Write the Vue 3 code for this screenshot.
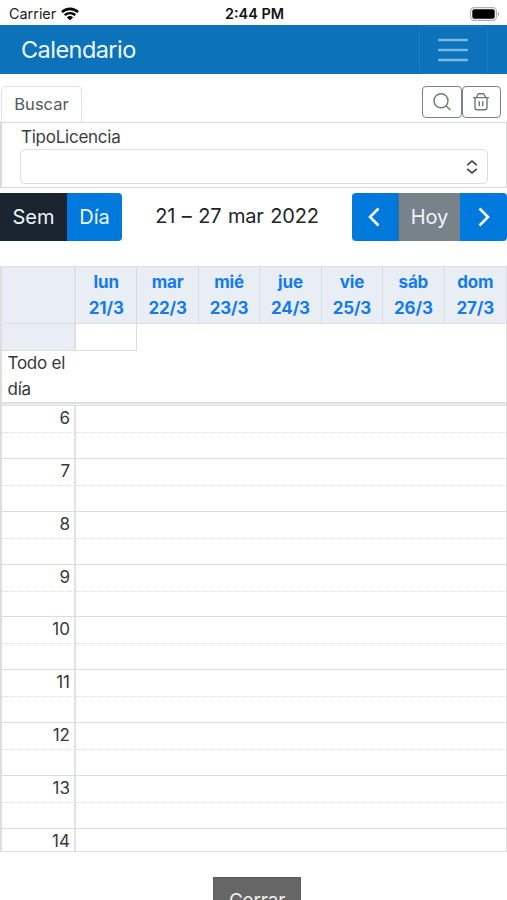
<script setup>
const days = [
  { name: 'lun', date: '21/3' },
  { name: 'mar', date: '22/3' },
  { name: 'mié', date: '23/3' },
  { name: 'jue', date: '24/3' },
  { name: 'vie', date: '25/3' },
  { name: 'sáb', date: '26/3' },
  { name: 'dom', date: '27/3' },
]
const hours = [6, 7, 8, 9, 10, 11, 12, 13, 14]
</script>

<template>
  <div class="screen">
    <div class="status">
      <div class="carrier">
        <span>Carrier</span>
        <svg class="wifi" viewBox="0 0 18 14" width="18" height="14">
          <path d="M1 5.1a11.6 11.6 0 0 1 16 0" fill="none" stroke="#000" stroke-width="2.6" />
          <path d="M3.7 8.2a7.7 7.7 0 0 1 10.6 0" fill="none" stroke="#000" stroke-width="2.3" />
          <path d="M9 13.3 5.9 10.4a4.5 4.5 0 0 1 6.2 0z" fill="#000" />
        </svg>
      </div>
      <div class="clock">2:44 PM</div>
      <svg class="battery" viewBox="0 0 30 14" width="30" height="14">
        <rect x=".6" y=".6" width="25.8" height="12.8" rx="3.6" fill="#fff" stroke="#b0b0b0" stroke-width="1.1" />
        <rect x="2.3" y="2.2" width="22.4" height="9.6" rx="2" fill="#000" />
        <path d="M27.8 4.8c2 .8 2 3.6 0 4.4z" fill="#aaa" />
      </svg>
    </div>

    <header class="navbar">
      <h1>Calendario</h1>
      <button class="toggler" aria-label="Menú">
        <svg viewBox="0 0 30 24" width="30" height="24">
          <path d="M1 2h28M1 12h28M1 22h28" stroke="#7cb8e3" stroke-width="2.3" stroke-linecap="round" />
        </svg>
      </button>
    </header>

    <div class="tabs">
      <div class="tab"><span>Buscar</span></div>
      <div class="actions">
        <button class="tool" aria-label="Buscar">
          <svg viewBox="0 0 20 20" width="20" height="20" fill="none" stroke="#70767b" stroke-width="1.4">
            <circle cx="9" cy="8.8" r="7" />
            <path d="m14 13.8 4.4 4.2" />
          </svg>
        </button>
        <button class="tool" aria-label="Borrar">
          <svg viewBox="0 0 20 20" width="20" height="20" fill="none" stroke="#70767b" stroke-width="1.4">
            <path d="M2 5.6h16M4 5.6v9.8q0 2.3 2.2 2.3h7.6q2.2 0 2.2-2.3V5.6M5.5 5.3l1.3-2.8q.3-.7 1-.7h4.4q.7 0 1 .7l1.3 2.8M8.3 9.3v5M11.7 9.3v5" />
          </svg>
        </button>
      </div>
    </div>

    <section class="filter">
      <label>TipoLicencia</label>
      <div class="select">
        <svg viewBox="0 0 12 14" width="12" height="14">
          <path d="m1.2 5.2 4.8-4 4.8 4M1.2 8.8l4.8 4 4.8-4" fill="none" stroke="#444" stroke-width="1.7" />
        </svg>
      </div>
    </section>

    <div class="toolbar">
      <div class="group views">
        <button class="sem">Sem</button>
        <button class="dia">Día</button>
      </div>
      <h2>21 – 27 mar 2022</h2>
      <div class="group paging">
        <button class="prev" aria-label="Anterior">
          <svg viewBox="0 0 12 20" width="12" height="20"><path d="M10.5 1.5 2 10l8.5 8.5" /></svg>
        </button>
        <button class="today">Hoy</button>
        <button class="next" aria-label="Siguiente">
          <svg viewBox="0 0 12 20" width="12" height="20"><path d="M1.5 1.5 10 10l-8.5 8.5" /></svg>
        </button>
      </div>
    </div>

    <section class="calendar">
      <div class="head">
        <div class="axis"></div>
        <div v-for="d in days" :key="d.date" class="day">
          <span>{{ d.name }}</span>
          <span>{{ d.date }}</span>
        </div>
      </div>
      <div class="head second">
        <div class="axis"></div>
        <div class="blank"></div>
      </div>
      <div class="allday"><span>Todo el día</span></div>
      <div class="divider"></div>
      <div class="slots">
        <div v-for="h in hours" :key="h" class="hour">
          <div class="time">{{ h }}</div>
          <div class="lane"></div>
          <div class="time half"></div>
          <div class="lane half"></div>
        </div>
      </div>
    </section>

    <div class="footer"><button class="close">Cerrar</button></div>
  </div>
</template>

<style>
body {
  background: #fff;
  overflow: hidden;
}
</style>

<style scoped>
* {
  box-sizing: border-box;
}
.screen {
  width: 507px;
  height: 900px;
  overflow: hidden;
  background: #fff;
  color: #212529;
  font-family: Inter, "Liberation Sans", sans-serif;
  font-size: 17px;
}
button {
  border: 0;
  padding: 0;
  margin: 0;
  background: none;
  font: inherit;
  color: inherit;
}
svg {
  display: block;
  flex: none;
}
.status {
  height: 25px;
  display: grid;
  grid-template-columns: 1fr auto 1fr;
  align-items: center;
  padding: 2px 7px 0 9px;
  color: #222;
  font-size: 14.4px;
}
.carrier {
  display: flex;
  align-items: center;
  gap: 5px;
}
.clock {
  font-weight: 600;
  color: #111;
}
.battery {
  justify-self: end;
}
.navbar {
  height: 49px;
  background: #0c72b9;
  display: flex;
  align-items: center;
  justify-content: space-between;
  padding: 0 19px 0 21px;
  color: #eef8ff;
}
h1 {
  margin: 0;
  font-size: 23.5px;
  font-weight: 400;
  letter-spacing: -0.55px;
}
.toggler {
  width: 69px;
  height: 48px;
  border: 1px solid #1c7bc0;
  border-radius: 4px;
  display: flex;
  align-items: center;
  justify-content: center;
  padding-right: 1px;
}
.tabs {
  height: 48px;
  padding: 12px 6px 0 1px;
  display: flex;
  justify-content: space-between;
  align-items: flex-start;
}
.tab {
  width: 81px;
  height: 36px;
  border: 1px solid #dee2e6;
  border-bottom: 0;
  border-radius: 5px 5px 0 0;
  display: flex;
  align-items: center;
  justify-content: center;
  padding-bottom: 2px;
  color: #54595e;
  font-size: 16.5px;
}
.actions {
  display: flex;
}
.tool {
  width: 39.5px;
  height: 32px;
  border: 1px solid #7b8187;
  border-radius: 4px;
  display: flex;
  align-items: center;
  justify-content: center;
}
.filter {
  height: 66px;
  border: 1px solid #d9dadc;
  border-left: 2px solid #d9dadc;
  padding: 3px 18px 0 18px;
}
label {
  display: block;
  height: 23px;
  line-height: 23px;
  padding-left: 1px;
  letter-spacing: -0.25px;
  color: #3b3e41;
}
.select {
  height: 35px;
  border: 1.5px solid #dcdfe2;
  border-radius: 5px;
  display: flex;
  align-items: center;
  justify-content: flex-end;
  padding-right: 9px;
}
.toolbar {
  height: 48px;
  margin-top: 5px;
  display: grid;
  grid-template-columns: 122px 1fr 155px;
}
.group {
  display: flex;
  overflow: hidden;
  color: #eef6ff;
  font-size: 20px;
  letter-spacing: -0.5px;
}
.group button {
  display: flex;
  align-items: center;
  justify-content: center;
}
.group path {
  fill: none;
  stroke: #fff;
  stroke-width: 2.6;
}
.views {
  border-radius: 0 4px 4px 0;
}
.paging {
  border-radius: 4px;
  letter-spacing: -0.2px;
}
.prev svg {
  margin-right: 2px;
}
.sem {
  width: 67px;
  background: #1a252f;
}
.dia {
  width: 55px;
  background: #0079dc;
}
.prev {
  width: 46px;
  background: #0079dc;
}
.today {
  width: 62px;
  background: #78828b;
  border-left: 1px solid #456a8d;
}
.next {
  width: 47px;
  background: #0079dc;
}
h2 {
  margin: 0;
  text-align: center;
  line-height: 46px;
  font-size: 20px;
  font-weight: 400;
  letter-spacing: -0.2px;
  word-spacing: 1.2px;
}
.calendar {
  margin-top: 25px;
  height: 586px;
  border: 1px solid #dedede;
  border-left: 2px solid #dedede;
  overflow: hidden;
}
.head {
  display: grid;
  grid-template-columns: 74px repeat(7, 1fr);
  height: 57px;
  background: #e8eef4;
  border-bottom: 1px solid #dcdfe1;
}
.axis {
  border-right: 2px solid #dedfe1;
  background: #e8eef4;
}
.day {
  border-right: 1px solid #d7dbdf;
  display: flex;
  flex-direction: column;
  align-items: center;
  padding-top: 3px;
  line-height: 25.5px;
  font-weight: 700;
  letter-spacing: -0.15px;
  color: #147bec;
}
.day:last-child {
  border-right: 0;
}
.second {
  height: 27px;
  background: #fff;
  border: 0;
}
.second .axis,
.blank {
  border-bottom: 1px solid #dedede;
}
.blank {
  border-right: 1px solid #dedede;
}
.allday {
  height: 51px;
  padding-left: 5.5px;
  line-height: 25.5px;
  letter-spacing: -0.25px;
  color: #35383b;
}
.allday span {
  display: block;
  width: 64px;
}
.divider {
  height: 4px;
  border-top: 2px solid #e0e0e0;
  border-bottom: 1px solid #dedede;
  background: #f2f2f2;
}
.hour {
  height: 52.86px;
  display: grid;
  grid-template-columns: 74px 1fr;
  grid-template-rows: 26px 1fr;
  border-bottom: 1px solid #dcdcdc;
}
.time {
  border-right: 2px solid #e2e2e2;
  text-align: right;
  padding-right: 4px;
  line-height: 25px;
  color: #35383b;
}
.half {
  border-top: 1px dotted #dcdcdc;
}
.footer {
  margin-top: 25px;
  display: flex;
  justify-content: center;
}
.close {
  width: 88px;
  height: 46px;
  margin-left: 7px;
  background: #666;
  border: 1px solid #5b5b5b;
  color: #eee;
  font-size: 19px;
  letter-spacing: -0.2px;
}
</style>
